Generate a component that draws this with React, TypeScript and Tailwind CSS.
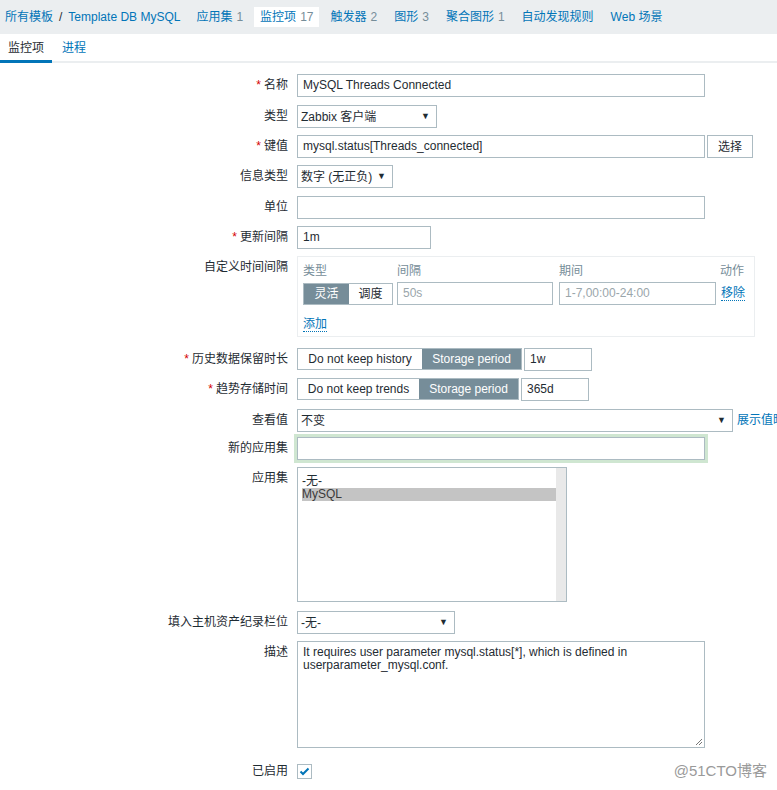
import React from "react";

const font = "font-['Liberation_Sans','Noto_Sans_CJK_SC',sans-serif]";

const Req = () => <span className="mr-[3px] text-[#d40000]">*</span>;

const Row: React.FC<{ label: string; req?: boolean; className?: string; children: React.ReactNode }> = ({
	label,
	req,
	className,
	children,
}) => (
	<div className={"flex items-start " + (className || "")}>
		<div className="w-[288px] shrink-0 text-right leading-[22px] pr-0">
			{req && <Req />}
			{label}
		</div>
		<div className="ml-[9px] flex items-start">{children}</div>
	</div>
);

const Input: React.FC<{ w: string; value?: string; placeholder?: string }> = ({ w, value, placeholder }) => (
	<div className={"h-[23px] border border-[#acbbc2] bg-white px-[5px] leading-[21px] " + w}>
		{value ? <span>{value}</span> : <span className="text-[#9aa6ab]">{placeholder}</span>}
	</div>
);

const Select: React.FC<{ w: string; value: string }> = ({ w, value }) => (
	<div className={"flex h-[23px] items-center justify-between border border-[#acbbc2] bg-white pl-[3px] pr-[6px] " + w}>
		<span>{value}</span>
		<span className="text-[9px]">▼</span>
	</div>
);

const Seg: React.FC<{ items: { t: string; w: string; on?: boolean }[] }> = ({ items }) => (
	<div className="flex h-[22px] border border-[#acbbc2]">
		{items.map((it) => (
			<div
				key={it.t}
				className={
					"flex items-center justify-center " +
					it.w +
					(it.on ? " bg-[#768d99] text-white" : " bg-white text-[#1f2c33]")
				}
			>
				{it.t}
			</div>
		))}
	</div>
);

const nav = [
	{ t: "应用集", n: "1" },
	{ t: "监控项", n: "17", on: true },
	{ t: "触发器", n: "2" },
	{ t: "图形", n: "3" },
	{ t: "聚合图形", n: "1" },
	{ t: "自动发现规则" },
	{ t: "Web 场景" },
];

export default function App() {
	return (
		<div className={"relative h-[790px] w-[777px] overflow-hidden bg-white text-[12px] text-[#1f2c33] " + font}>
			{/* BREADCRUMB BAR */}
			<div className="flex h-[34px] items-center bg-[#ebeef0] pl-[5px]">
				<span className="text-[#0275b8]">所有模板</span>
				<span className="mx-[6px] text-[#1f2c33]">/</span>
				<span className="text-[#0275b8]">Template DB MySQL</span>
				<div className="ml-[10px] flex items-center">
					{nav.map((n) => (
						<div
							key={n.t}
							className={"mr-[5px] flex h-[20px] items-center px-[6px] " + (n.on ? "bg-white" : "")}
						>
							<span className="text-[#0275b8]">{n.t}</span>
							{n.n && <span className="ml-[4px] text-[#768d99]">{n.n}</span>}
						</div>
					))}
				</div>
			</div>

			{/* TABS */}
			<div className="flex h-[29px] items-center border-b-2 border-[#ebeef0]">
				<div className="relative flex h-full w-[52px] items-center justify-center">
					监控项
					<div className="absolute bottom-[-2px] left-0 h-[3px] w-full bg-[#0275b8]"></div>
				</div>
				<div className="ml-[10px] text-[#0275b8]">进程</div>
			</div>

			{/* FORM */}
			<div className="flex flex-col pt-[11px]">
				<Row label="名称" req>
					<Input w="w-[408px]" value="MySQL Threads Connected" />
				</Row>
				<Row label="类型" className="mt-[8px]">
					<Select w="w-[140px]" value="Zabbix 客户端" />
				</Row>
				<Row label="键值" req className="mt-[7px]">
					<Input w="w-[408px]" value="mysql.status[Threads_connected]" />
					<div className="ml-[2px] flex h-[23px] w-[46px] items-center justify-center border border-[#acbbc2] bg-white">
						选择
					</div>
				</Row>
				<Row label="信息类型" className="mt-[7px]">
					<Select w="w-[96px]" value="数字 (无正负)" />
				</Row>
				<Row label="单位" className="mt-[8px]">
					<Input w="w-[408px]" />
				</Row>
				<Row label="更新间隔" req className="mt-[7px]">
					<Input w="w-[134px]" value="1m" />
				</Row>
				<Row label="自定义时间间隔" className="mt-[7px]">
					<div className="h-[81px] w-[458px] border border-[#ebeef0] px-[5px] pt-[5px]">
						<div className="flex text-[#768d99]">
							<div className="w-[94px]">类型</div>
							<div className="w-[162px]">间隔</div>
							<div className="w-[161px]">期间</div>
							<div>动作</div>
						</div>
						<div className="mt-[2px] flex items-center">
							<Seg
								items={[
									{ t: "灵活", w: "w-[45px]", on: true },
									{ t: "调度", w: "w-[43px]" },
								]}
							/>
							<div className="ml-[4px]">
								<Input w="w-[156px]" placeholder="50s" />
							</div>
							<div className="ml-[6px]">
								<Input w="w-[157px]" placeholder="1-7,00:00-24:00" />
							</div>
							<span className="ml-[5px] border-b border-dotted border-[#0275b8] leading-[14px] text-[#0275b8]">
								移除
							</span>
						</div>
						<div className="mt-[10px]">
							<span className="border-b border-dotted border-[#0275b8] text-[#0275b8]">添加</span>
						</div>
					</div>
				</Row>
				<Row label="历史数据保留时长" req className="mt-[11px]">
					<Seg
						items={[
							{ t: "Do not keep history", w: "w-[124px]" },
							{ t: "Storage period", w: "w-[99px]", on: true },
						]}
					/>
					<div className="ml-[2px]">
						<Input w="w-[68px]" value="1w" />
					</div>
				</Row>
				<Row label="趋势存储时间" req className="mt-[7px]">
					<Seg
						items={[
							{ t: "Do not keep trends", w: "w-[121px]" },
							{ t: "Storage period", w: "w-[99px]", on: true },
						]}
					/>
					<div className="ml-[2px]">
						<Input w="w-[68px]" value="365d" />
					</div>
				</Row>
				<Row label="查看值" className="mt-[8px]">
					<Select w="w-[436px]" value="不变" />
					<span className="ml-[4px] whitespace-nowrap leading-[23px] text-[#0275b8]">展示值映射</span>
				</Row>
				<Row label="新的应用集" className="mt-[5px]">
					<div className="h-[23px] w-[408px] border border-[#acbbc2] bg-white shadow-[0_0_0_3px_#cfe6d1]"></div>
				</Row>
				<Row label="应用集" className="mt-[7px]">
					<div className="flex h-[135px] w-[270px] border border-[#acbbc2] bg-white">
						<div className="flex-1 pl-[4px] pt-[7px] leading-[13px]">
							<div>-无-</div>
							<div className="bg-[#c4c4c4] text-[#3a3a3a]">MySQL</div>
						</div>
						<div className="w-[10px] bg-[#e9e9e9]"></div>
					</div>
				</Row>
				<Row label="填入主机资产纪录栏位" className="mt-[9px]">
					<Select w="w-[158px]" value="-无-" />
				</Row>
				<Row label="描述" className="mt-[7px]">
					<div className="relative h-[107px] w-[408px] border border-[#acbbc2] bg-white px-[5px] pt-[4px] leading-[13px]">
						It requires user parameter mysql.status[*], which is defined in
						<br />
						userparameter_mysql.conf.
						<svg className="absolute bottom-[1px] right-[1px]" width="8" height="8" viewBox="0 0 8 8">
							<path d="M7 1L1 7M7 4L4 7" stroke="#777" strokeWidth="1" />
						</svg>
					</div>
				</Row>
				<Row label="已启用" className="mt-[12px]">
					<div className="mt-[4px] flex h-[15px] w-[15px] items-center justify-center border border-[#acbbc2] bg-white">
						<svg width="11" height="9" viewBox="0 0 11 9">
							<path d="M1.5 4.5L4 7L9.5 1.5" fill="none" stroke="#0275b8" strokeWidth="2" />
						</svg>
					</div>
				</Row>
			</div>

			{/* WATERMARK */}
			<div className="absolute bottom-[8px] right-[10px] text-[15px] text-[#9a9a9a]">@51CTO博客</div>
		</div>
	);
}
